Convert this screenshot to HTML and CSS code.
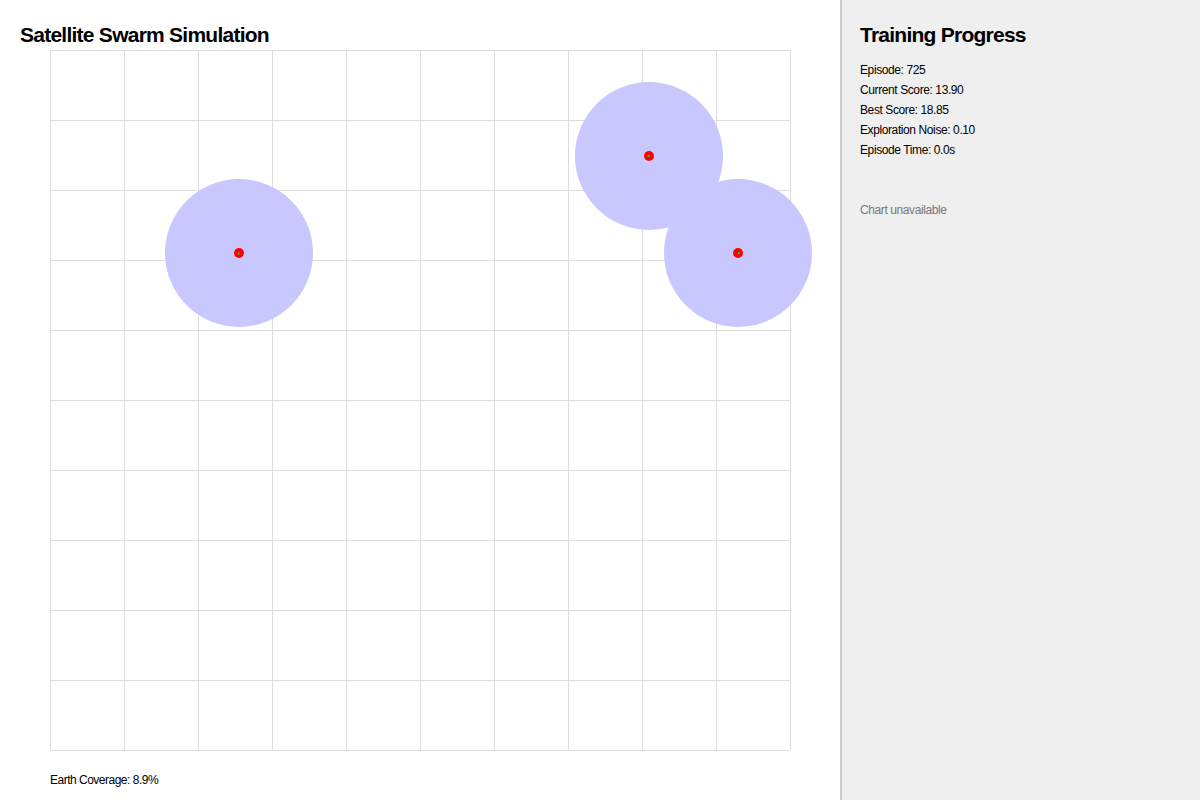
FILE: index.html
```html
<!DOCTYPE html>
<html>
<head>
<meta charset="utf-8">
<link rel="stylesheet" href="styles.css">
</head>
<body>
<div class="app">
  <main class="sim">
    <h1 class="title">Satellite Swarm Simulation</h1>
    <svg class="canvas" width="800" height="710" viewBox="0 0 800 710">
      <g class="grid">
        <line x1="30" y1="0" x2="30" y2="700"/>
        <line x1="104" y1="0" x2="104" y2="700"/>
        <line x1="178" y1="0" x2="178" y2="700"/>
        <line x1="252" y1="0" x2="252" y2="700"/>
        <line x1="326" y1="0" x2="326" y2="700"/>
        <line x1="400" y1="0" x2="400" y2="700"/>
        <line x1="474" y1="0" x2="474" y2="700"/>
        <line x1="548" y1="0" x2="548" y2="700"/>
        <line x1="622" y1="0" x2="622" y2="700"/>
        <line x1="696" y1="0" x2="696" y2="700"/>
        <line x1="770" y1="0" x2="770" y2="700"/>
        <line x1="30" y1="0" x2="770" y2="0"/>
        <line x1="30" y1="70" x2="770" y2="70"/>
        <line x1="30" y1="140" x2="770" y2="140"/>
        <line x1="30" y1="210" x2="770" y2="210"/>
        <line x1="30" y1="280" x2="770" y2="280"/>
        <line x1="30" y1="350" x2="770" y2="350"/>
        <line x1="30" y1="420" x2="770" y2="420"/>
        <line x1="30" y1="490" x2="770" y2="490"/>
        <line x1="30" y1="560" x2="770" y2="560"/>
        <line x1="30" y1="630" x2="770" y2="630"/>
        <line x1="30" y1="700" x2="770" y2="700"/>
      </g>
      <g class="coverage">
        <circle cx="219" cy="203" r="74"/>
        <circle cx="629" cy="106" r="74"/>
        <circle cx="718" cy="203" r="74"/>
      </g>
      <g class="sat">
        <circle cx="219" cy="203" r="5"/>
        <circle cx="629" cy="106" r="5"/>
        <circle cx="718" cy="203" r="5"/>
      </g>
      <g class="dir">
        <rect x="217.5" y="202.5" width="2" height="2"/>
        <rect x="627.5" y="105" width="2.5" height="2"/>
        <rect x="718" y="202" width="2" height="2"/>
      </g>
    </svg>
    <p class="coverage-text">Earth Coverage: 8.9%</p>
  </main>
  <aside class="panel">
    <h2 class="panel-title">Training Progress</h2>
    <ul class="stats">
      <li>Episode: 725</li>
      <li>Current Score: 13.90</li>
      <li>Best Score: 18.85</li>
      <li>Exploration Noise: 0.10</li>
      <li>Episode Time: 0.0s</li>
    </ul>
    <p class="chart-note">Chart unavailable</p>
  </aside>
</div>
</body>
</html>
```
FILE: styles.css
```css
html, body {
  margin: 0;
  padding: 0;
  height: 100%;
  font-family: "Liberation Sans", Arial, sans-serif;
  color: #000;
}
.app {
  display: flex;
  width: 1200px;
  height: 800px;
}
.sim {
  width: 840px;
  flex: none;
  background: #fff;
  padding: 0 0 0 20px;
  box-sizing: border-box;
}
.title {
  font-size: 21px;
  font-weight: bold;
  letter-spacing: -0.75px;
  margin: 0;
  padding-top: 23px;
  line-height: 24px;
  height: 27px;
}
.canvas {
  display: block;
  overflow: visible;
}
.grid line {
  stroke: #ddd;
  stroke-width: 1;
  shape-rendering: crispEdges;
}
.coverage circle {
  fill: #c8c8ff;
}
.sat circle {
  fill: #f00;
}
.dir rect {
  fill: #1c1;
}
.coverage-text {
  margin: 13px 0 0 30px;
  font-size: 12px;
  letter-spacing: -0.5px;
  line-height: 14px;
}
.panel {
  flex: 1;
  background: #efefef;
  border-left: 2px solid #ccc;
  padding: 0 18px;
}
.panel-title {
  font-size: 21px;
  font-weight: bold;
  letter-spacing: -0.75px;
  margin: 0;
  padding-top: 23px;
  line-height: 24px;
}
.stats {
  list-style: none;
  margin: 13px 0 0;
  padding: 0;
  font-size: 12px;
  letter-spacing: -0.4px;
}
.stats li {
  line-height: 20px;
}
.chart-note {
  margin: 40px 0 0;
  font-size: 12px;
  letter-spacing: -0.4px;
  line-height: 20px;
  color: #777;
}
```
